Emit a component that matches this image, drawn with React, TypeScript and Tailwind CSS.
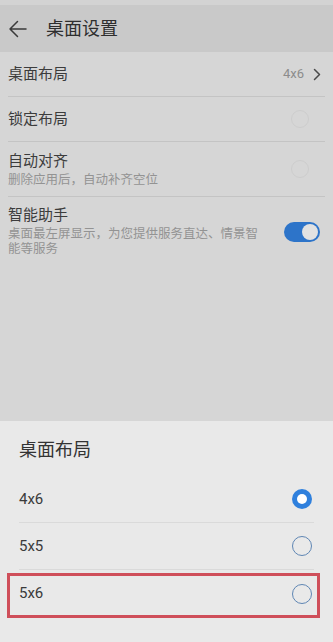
import React from 'react';

const font = { fontFamily: 'Roboto, "Noto Sans CJK SC", sans-serif' };

function FaintCircle() {
  return <div className="w-[18px] h-[18px] rounded-full border border-[#cdcdcd] mr-[16px]" />;
}

function Radio({ checked }: { checked?: boolean }) {
  if (checked) {
    return (
      <div className="w-[20px] h-[20px] rounded-full bg-[#2f80dd] flex items-center justify-center">
        <div className="w-[10px] h-[10px] rounded-full bg-white" />
      </div>
    );
  }
  return <div className="w-[20px] h-[20px] rounded-full border border-[#5f86b4]" />;
}

export default function App() {
  const options = [
    { label: '4x6', checked: true },
    { label: '5x5' },
    { label: '5x6' },
  ];

  return (
    <div className="w-[333px] h-[642px] bg-[#d6d6d6] flex flex-col overflow-hidden" style={font}>
      <div className="h-[5px] bg-[#d3d3d3]" />
      <div className="h-[47px] bg-[#c9c9c9] flex items-center">
        <svg width="20" height="18" viewBox="0 0 20 18" className="ml-[8px]" fill="none" stroke="#3a3a3a" strokeWidth="1.5" strokeLinecap="round" strokeLinejoin="round">
          <path d="M18 9H2M9.5 1.5L2 9l7.5 7.5" />
        </svg>
        <span className="ml-[18px] text-[18px] text-[#2e2e2e]">桌面设置</span>
      </div>

      <div className="flex flex-col pl-[8px] pr-[8px]">
        <div className="h-[45px] flex items-center justify-between border-b border-[#c4c4c4]">
          <span className="text-[15px] text-[#3c3c3c]">桌面布局</span>
          <div className="flex items-center gap-[9px] mr-[4px]">
            <span className="text-[13px] text-[#8c8c8c]">4x6</span>
            <svg width="8" height="13" viewBox="0 0 8 13" fill="none" stroke="#4a4a4a" strokeWidth="1.5" strokeLinecap="round" strokeLinejoin="round">
              <path d="M1.5 1.5l5 5-5 5" />
            </svg>
          </div>
        </div>
        <div className="h-[45px] flex items-center justify-between border-b border-[#c4c4c4]">
          <span className="text-[15px] text-[#3c3c3c]">锁定布局</span>
          <FaintCircle />
        </div>
        <div className="h-[55px] flex items-center justify-between border-b border-[#c4c4c4]">
          <div className="flex flex-col">
            <span className="text-[15px] leading-[20px] text-[#3c3c3c]">自动对齐</span>
            <span className="text-[12.5px] leading-[17px] text-[#939393]">删除应用后，自动补齐空位</span>
          </div>
          <FaintCircle />
        </div>
        <div className="flex items-start justify-between pt-[8px]">
          <div className="flex flex-col w-[262px]">
            <span className="text-[15px] leading-[20px] text-[#3c3c3c]">智能助手</span>
            <span className="text-[12.5px] leading-[15px] text-[#939393] mt-[1px]">桌面最左屏显示，为您提供服务直达、情景智能等服务</span>
          </div>
          <div className="mt-[17px] mr-[5px] w-[36px] h-[20px] rounded-full bg-[#2d74c9] flex items-center justify-end pr-[2px]">
            <div className="w-[16px] h-[16px] rounded-full bg-[#e2e2e2]" />
          </div>
        </div>
      </div>

      <div className="flex-1" />

      <div className="h-[221px] bg-[#e9e9e9] relative px-[19px] pt-[17px]">
        <div className="text-[18px] leading-[24px] text-[#333333]">桌面布局</div>
        <div className="mt-[14px] flex flex-col">
          {options.map((o, i) => (
            <div
              key={o.label}
              className={`h-[47px] flex items-center justify-between pr-[2px] ${i < 2 ? 'border-b border-[#dadada]' : ''}`}
            >
              <span className="text-[15px] text-[#3a3a3a]">{o.label}</span>
              <Radio checked={o.checked} />
            </div>
          ))}
        </div>
        <div className="absolute left-[7px] top-[152px] w-[313px] h-[45px] border-[3px] border-[#cf4f5a]" />
      </div>
    </div>
  );
}
